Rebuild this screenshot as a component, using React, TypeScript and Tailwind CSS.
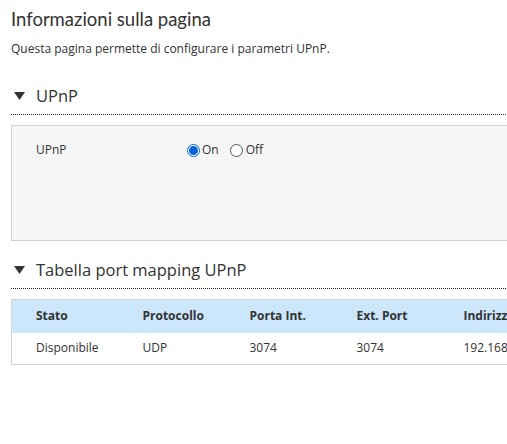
export default function App() {
  const cols = ['Stato', 'Protocollo', 'Porta Int.', 'Ext. Port', 'Indirizzo IP']
  const row = ['Disponibile', 'UDP', '3074', '3074', '192.168.1.2']

  const Arrow = () => (
    <svg width="11" height="8" viewBox="0 0 11 8" className="mr-[11px] ml-[3px]">
      <polygon points="0,0 11,0 5.5,8" fill="#333" />
    </svg>
  )

  return (
    <div className="w-[507px] h-[444px] overflow-hidden bg-white text-[#333]" style={{ fontFamily: '"Open Sans", "Noto Sans", sans-serif' }}>
      <div className="w-[640px] pl-[11px]">
        {/* Page title */}
        <h1 className="pt-[6px] text-[18.5px] leading-[27px] text-[#333]" style={{ fontFamily: 'Lato, "Open Sans", sans-serif' }}>
          Informazioni sulla pagina
        </h1>
        <p className="mt-[8px] text-[12px] leading-[16px]">Questa pagina permette di configurare i parametri UPnP.</p>

        {/* UPnP section */}
        <div className="mt-[27px] flex items-center h-[24px] border-b border-dotted border-[#222] pb-[6px] box-content">
          <Arrow />
          <span className="text-[16.5px]">UPnP</span>
        </div>
        <div className="mt-[10px] h-[116px] bg-[#f6f6f6] border border-[#d2d2d2] pl-[24px] pt-[15px]">
          <div className="flex items-center text-[12px]">
            <span className="w-[151px]">UPnP</span>
            <label className="flex items-center gap-[2px]">
              <span className="w-[13px] h-[13px] rounded-full border border-[#0a64d8] flex items-center justify-center bg-white">
                <span className="w-[9px] h-[9px] rounded-full bg-[#0a64d8]" />
              </span>
              <span>On</span>
            </label>
            <label className="flex items-center gap-[3px] ml-[11px]">
              <span className="w-[13px] h-[13px] rounded-full border border-[#555] bg-white" />
              <span>Off</span>
            </label>
          </div>
        </div>

        {/* Port mapping table section */}
        <div className="mt-[17px] flex items-center h-[24px] border-b border-dotted border-[#222] pb-[6px] box-content">
          <Arrow />
          <span className="text-[16.5px]">Tabella port mapping UPnP</span>
        </div>
        <table className="mt-[10px] w-[629px] border border-[#d2d2d2] text-[12px] border-collapse">
          <thead>
            <tr className="bg-[#cce6fb] h-[33px]">
              {cols.map((c) => (
                <th key={c} className="w-[107px] pl-[24px] text-left font-bold">
                  {c}
                </th>
              ))}
              <th />
            </tr>
          </thead>
          <tbody>
            <tr className="h-[32px]">
              {row.map((c, i) => (
                <td key={i} className="pl-[24px]">
                  {c}
                </td>
              ))}
              <td />
            </tr>
          </tbody>
        </table>
      </div>
    </div>
  )
}
